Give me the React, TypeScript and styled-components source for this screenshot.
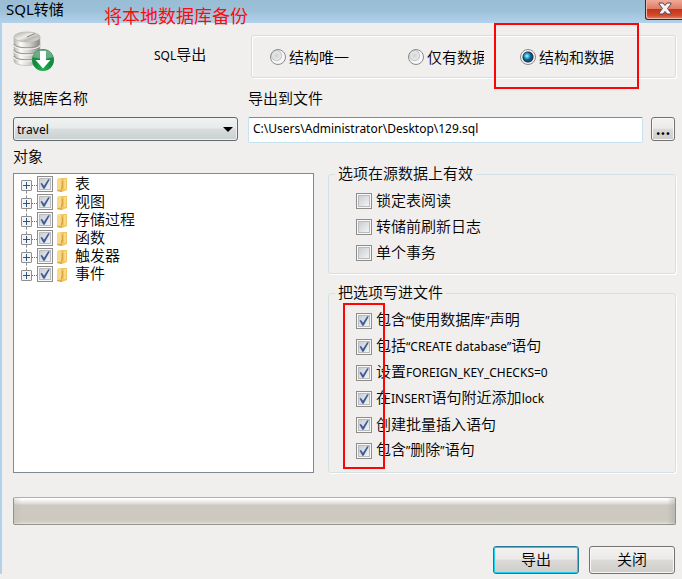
import React from 'react';
import styled, { createGlobalStyle } from 'styled-components';

const GlobalStyle = createGlobalStyle`
  *, *::before, *::after { box-sizing: border-box; }
  body {
    margin: 0;
    background: #f0efee;
    color: #000;
    font: 350 15px/20px "Noto Sans CJK SC", sans-serif;
  }
  button, input, select { font: inherit; color: inherit; margin: 0; }
`;

const Dialog = styled.main`
  position: relative;
  padding-bottom: 5px;
  background: linear-gradient(#b0d2ec, #b0d2ec) left top / 2px calc(100% - 5px) no-repeat #f0efee;
`;

const TitleBar = styled.header`
  display: flex;
  justify-content: space-between;
  height: 23px;
  padding-left: 6px;
  background: linear-gradient(#9abdd6, #9dc0d9 45%, #b1d2ea);
`;

const Title = styled.h1`
  margin: 0;
  font-family: "Noto Sans", "Noto Sans CJK SC", sans-serif;
  font-size: 15px;
  line-height: 19px;
  font-weight: 400;
`;

const Note = styled.strong`
  position: absolute;
  left: 104px;
  top: 3px;
  color: #fb0d0d;
  font-size: 18px;
  line-height: 24px;
  font-weight: 400;
`;

const CloseButton = styled.button`
  display: flex;
  justify-content: center;
  width: 37px;
  height: 20px;
  padding: 2px 0 0 1px;
  border: 1px solid #4b2023;
  border-width: 0 0 1px 1px;
  border-radius: 0 0 0 3px;
  background: linear-gradient(#f1aa98, #df7c66 45%, #c5341c 50%, #d24a2c 80%, #e08468);
  box-shadow: inset 1px -1px #efb5a5;
`;

const Body = styled.form`
  padding: 8px 6px 0 13px;
`;

const TopRow = styled.div`
  display: grid;
  grid-template-columns: 141px 97px 1fr;
  height: 57px;
`;

const ExportLabel = styled.span`
  padding-top: 13px;
`;

const Latin = styled.span`
  font-family: "Noto Sans", sans-serif;
  font-weight: 400;
  font-size: 12px;
`;

const RadioPanel = styled.div`
  position: relative;
  display: flex;
  align-items: center;
  height: 43px;
  margin-top: 4px;
  padding-left: 18px;
  border: 1px solid #d3dfe4;
  border-radius: 3px;
  box-shadow: inset 1px 1px #fff, 1px 1px #fff;
`;

const Choice = styled.label<{ $width: number }>`
  display: flex;
  align-items: center;
  gap: 3px;
  width: ${(p) => p.$width}px;
  overflow: hidden;
  white-space: nowrap;
  flex: none;
`;

const ChoiceGap = styled.span<{ $width: number }>`
  flex: 0 0 ${(p) => p.$width}px;
`;

const Radio = styled.input.attrs({ type: 'radio' })`
  appearance: none;
  flex: none;
  width: 16px;
  height: 16px;
  border: 1px solid #8a8a88;
  border-radius: 50%;
  background: radial-gradient(circle at 40% 40%, #cfd3d6, #e6e7e8 4px, #c3c5c6 5px, #f8f8f8 6px);
  &:checked {
    background: radial-gradient(circle at 6px 6px, #b9f1ff 0, #38b5dc 2px, transparent 4px),
      radial-gradient(circle, #12547e 4px, #173049 5px, #f6f6f6 6px);
  }
`;

const RedFrame = styled.span<{ $left: number; $top: number; $bottom: number; $width: number }>`
  position: absolute;
  left: ${(p) => p.$left}px;
  top: ${(p) => p.$top}px;
  bottom: ${(p) => p.$bottom}px;
  width: ${(p) => p.$width}px;
  border: 2px solid #fd0505;
  pointer-events: none;
`;

const Fields = styled.div`
  display: grid;
  grid-template-columns: 227px 1fr 25px;
  column-gap: 8px;
  row-gap: 9px;
`;

const FieldLabel = styled.label<{ $wide?: boolean }>`
  grid-column: ${(p) => (p.$wide ? 'span 2' : 'auto')};
  line-height: 20px;
`;

const SelectBox = styled.div`
  display: grid;
  align-items: center;
  width: 225px;
  height: 24px;
  & > * { grid-area: 1 / 1; }
  & > svg { justify-self: end; margin-right: 5px; pointer-events: none; }
`;

const Select = styled.select`
  appearance: none;
  width: 100%;
  height: 24px;
  padding: 0 3px;
  border: 1px solid #62696c;
  border-radius: 3px;
  background: linear-gradient(#f1f2f2, #e8ebeb 45%, #d9dddd 50%, #c8d0d0);
  box-shadow: inset 0 0 0 1px #eef3f3;
  font: 12px "Noto Sans", sans-serif;
`;

const PathInput = styled.input`
  width: 100%;
  min-width: 0;
  height: 26px;
  padding: 0 4px 3px;
  border: 1px solid #c7e2ee;
  border-top-color: #5f94b5;
  border-radius: 2px;
  background: #fff;
  font: 12px "Noto Sans", sans-serif;
`;

const Button = styled.button<{ $primary?: boolean; $small?: boolean }>`
  width: ${(p) => (p.$small ? 24 : 86)}px;
  height: ${(p) => (p.$small ? 24 : 28)}px;
  padding: 0 0 ${(p) => (p.$small ? 0 : 2)}px;
  border: 1px solid ${(p) => (p.$primary ? '#277896' : '#73726e')};
  border-radius: 3px;
  background: linear-gradient(#f3f2f1, #ebeae9 47%, #dcdad8 50%, #cfcdc9);
  box-shadow: inset 0 0 0 1px ${(p) => (p.$primary ? '#1cd0f2' : '#f8f8f7')};
  font-weight: ${(p) => (p.$small ? 700 : 'inherit')};
  line-height: 20px;
`;

const Columns = styled.div`
  display: grid;
  grid-template-columns: 301px 1fr;
  column-gap: 14px;
  margin-top: 3px;
`;

const LeftColumn = styled.section`
  display: flex;
  flex-direction: column;
  gap: 7px;
`;

const Heading = styled.h2`
  margin: 0;
  font-size: 15px;
  line-height: 20px;
  font-weight: inherit;
`;

const Tree = styled.ul`
  flex: 1;
  margin: 0;
  padding: 1px 7px;
  border: 1px solid #838791;
  background: #fff;
  list-style: none;
`;

const TreeRow = styled.li`
  display: flex;
  align-items: center;
  height: 18px;
`;

const Expander = styled.button`
  position: relative;
  flex: none;
  width: 11px;
  height: 11px;
  margin-top: 2px;
  padding: 0;
  border: 1px solid #918f8b;
  border-radius: 1px;
  background: linear-gradient(#2c5486, #2c5486) center / 7px 1px no-repeat,
    linear-gradient(#2c5486, #2c5486) center / 1px 7px no-repeat, #f5f4f2;
  li + li > &::before {
    content: "";
    position: absolute;
    left: 4px;
    bottom: 10px;
    height: 7px;
    border-left: 1px dashed #8e8e8e;
  }
`;

const Dots = styled.span`
  width: 5px;
  height: 1px;
  margin-top: 2px;
  border-top: 1px dotted #777;
`;

const TreeLabel = styled.label`
  display: flex;
  align-items: center;
  line-height: 16px;
  & > svg { margin: 1px 7px 0 4px; }
  & > span:last-child { padding-bottom: 2px; }
`;

const RightColumn = styled.div`
  display: flex;
  flex-direction: column;
  gap: 9px;
  padding-top: 18px;
`;

const Group = styled.fieldset<{ $roomy?: boolean }>`
  min-width: 0;
  margin: 0;
  padding: ${(p) => (p.$roomy ? '5px 8px 8px 27px' : '4px 8px 7px 27px')};
  border: 1px solid #d3e0e4;
  border-radius: 3px;
  box-shadow: 1px 1px #fff;
`;

const Legend = styled.legend`
  height: 20px;
  margin-left: -21px;
  padding: 0 3px;
  line-height: 18px;
`;

const Checks = styled.div`
  position: relative;
`;

const CheckLabel = styled.label`
  display: flex;
  align-items: center;
  gap: 4px;
  height: 26px;
  & > span:last-child { padding-bottom: 2px; }
`;

const CheckBox = styled.span`
  display: grid;
  place-items: center;
  flex: none;
  width: 16px;
  height: 16px;
  & > * { grid-area: 1 / 1; }
  & > svg { pointer-events: none; }
  & > input:not(:checked) + svg { display: none; }
`;

const CheckInput = styled.input.attrs({ type: 'checkbox' })`
  appearance: none;
  width: 16px;
  height: 16px;
  border: 1px solid #8e8d8b;
  background: linear-gradient(135deg, #c9ced3, #f3f3f3) center / 10px 10px no-repeat,
    linear-gradient(#b9bcbe, #b9bcbe) center / 12px 12px no-repeat, #f8f8f8;
`;

const ProgressTrack = styled.div`
  height: 28px;
  margin-top: 24px;
  border: 1px solid #92918b;
  border-top-color: #b2b0ac;
  border-radius: 2px;
  background: linear-gradient(90deg, #b8b5ae55, transparent 8px, transparent calc(100% - 8px), #aaa7a288),
    linear-gradient(#fff 0, #fff 1px, #f1f0ee 3px, #dcdad7 6px, #cdc9c1 7px, #cdc9c1 22px, #d5d4cc 25px, #eeeeea 26px);
`;

const Footer = styled.footer`
  display: flex;
  justify-content: flex-end;
  gap: 10px;
  margin-top: 21px;
  padding-right: 1px;
`;

function Mixed({ text }: { text: string }) {
  const parts = text.split(/([\u0020-\u007e“”]+)/).filter(Boolean);
  return (
    <span>
      {parts.map((part, i) => (/^[\u0020-\u007e“”]/.test(part) ? <Latin key={i}>{part}</Latin> : part))}
    </span>
  );
}

function Check({ id, on }: { id: string; on?: boolean }) {
  return (
    <CheckBox>
      <CheckInput id={id} defaultChecked={on} />
      <svg width="12" height="12" viewBox="0 0 12 12" aria-hidden="true">
        <path d="M1.5 5.6 3 5 5 7.8 9.2 1.2 10.8 1.6 5.6 10.8 4.3 10.8Z" fill="#3f5c97" />
      </svg>
    </CheckBox>
  );
}

function DatabaseIcon() {
  return (
    <svg width="42" height="42" viewBox="0 0 42 42" aria-hidden="true">
      <defs>
        <linearGradient id="metal">
          <stop offset="0" stopColor="#b7b5af" />
          <stop offset=".25" stopColor="#fbfbf9" />
          <stop offset=".6" stopColor="#d2d0cb" />
          <stop offset="1" stopColor="#85837d" />
        </linearGradient>
        <linearGradient id="lid" x2="1" y2="1">
          <stop offset="0" stopColor="#aaa8a3" />
          <stop offset=".45" stopColor="#efeeeb" />
          <stop offset=".65" stopColor="#b9b7b1" />
          <stop offset="1" stopColor="#f5f4f2" />
        </linearGradient>
        <radialGradient id="green" cx=".5" cy=".9" r=".9">
          <stop offset="0" stopColor="#20b34f" />
          <stop offset=".5" stopColor="#0d8a3c" />
          <stop offset="1" stopColor="#3a8d5a" />
        </radialGradient>
      </defs>
      <path d="M1 6v24c0 6 26 6 26 0V6Z" fill="url(#metal)" stroke="#bab8b2" strokeWidth=".7" />
      <path d="M1 13c2 5 24 5 26 0M1 19c2 5 24 5 26 0M1 25c2 5 24 5 26 0" fill="none" stroke="#97958f" strokeWidth="1.2" />
      <path d="M1 14.4c2 5 24 5 26 0M1 20.4c2 5 24 5 26 0M1 26.4c2 5 24 5 26 0" fill="none" stroke="#f7f6f3" strokeWidth="1.2" />
      <ellipse cx="14" cy="6" rx="13" ry="5" fill="url(#lid)" stroke="#c0bfbb" />
      <path d="m14 6 8-3.5" stroke="#8e8c87" strokeWidth="1.2" />
      <circle cx="30" cy="29" r="11" fill="url(#green)" />
      <path d="M20 26a10.5 10.5 0 0 1 20 0q-10 4-20 0Z" fill="#fff" opacity=".3" />
      <path d="M27 20h6v9h4.500L30 37.500 22.500 29H27Z" fill="#fff" />
    </svg>
  );
}

function FolderIcon() {
  return (
    <svg width="11" height="14" viewBox="0 0 11 14" aria-hidden="true">
      <path d="M0 1 4 0h6v12l-5 2-5-1Z" fill="#f0c660" />
      <path d="M0 1 4 0v11L0 12Z" fill="#f8d98a" />
      <path d="M5 3h1v6l-1 2-1 1V9l1-1Z" fill="#d8a440" />
      <path d="M7 1h2v10H7Z" fill="#f8d885" />
      <path d="M0 12h5v2l-5-1Z" fill="#e2aa42" />
    </svg>
  );
}

const objects = ['表', '视图', '存储过程', '函数', '触发器', '事件'];
const sourceOptions = ['锁定表阅读', '转储前刷新日志', '单个事务'];
const fileOptions = [
  '包含“使用数据库”声明',
  '包括“CREATE database”语句',
  '设置FOREIGN_KEY_CHECKS=0',
  '在INSERT语句附近添加lock',
  '创建批量插入语句',
  '包含”删除”语句',
];

export default function App() {
  return (
    <>
      <GlobalStyle />
      <Dialog>
        <TitleBar>
          <Title>SQL转储</Title>
          <CloseButton type="button" aria-label="关闭">
            <svg width="14" height="13" viewBox="0 0 14 13" aria-hidden="true">
              <path
                d="M1 1h4l2 2.500L9 1h4v1L9.500 6.500 13 11v1H9L7 9.500 5 12H1v-1l3.500-4.500L1 2Z"
                fill="#f5f2f1"
                stroke="#5b4654"
              />
            </svg>
          </CloseButton>
        </TitleBar>
        <Note>将本地数据库备份</Note>

        <Body onSubmit={(e) => e.preventDefault()}>
          <TopRow>
            <DatabaseIcon />
            <ExportLabel id="export-kind">
              <Mixed text="SQL导出" />
            </ExportLabel>
            <RadioPanel role="radiogroup" aria-labelledby="export-kind">
              <Choice $width={90}>
                <Radio name="kind" />
                结构唯一
              </Choice>
              <ChoiceGap $width={48} />
              <Choice $width={76}>
                <Radio name="kind" />
                仅有数据
              </Choice>
              <ChoiceGap $width={36} />
              <Choice $width={100}>
                <Radio name="kind" defaultChecked />
                结构和数据
              </Choice>
              <RedFrame $left={242} $top={-13} $bottom={-12} $width={145} />
            </RadioPanel>
          </TopRow>

          <Fields>
            <FieldLabel htmlFor="database">数据库名称</FieldLabel>
            <FieldLabel htmlFor="path" $wide>
              导出到文件
            </FieldLabel>
            <SelectBox>
              <Select id="database" defaultValue="travel">
                <option>travel</option>
              </Select>
              <svg width="10" height="5" viewBox="0 0 10 5" aria-hidden="true">
                <path d="M0 0h10L5 5Z" />
              </svg>
            </SelectBox>
            <PathInput id="path" defaultValue="C:\Users\Administrator\Desktop\129.sql" />
            <Button type="button" $small aria-label="浏览">
              ...
            </Button>
          </Fields>

          <Columns>
            <LeftColumn>
              <Heading id="objects">对象</Heading>
              <Tree aria-labelledby="objects">
                {objects.map((name, i) => (
                  <TreeRow key={name}>
                    <Expander type="button" aria-label={`展开${name}`} />
                    <Dots />
                    <TreeLabel htmlFor={`object-${i}`}>
                      <Check id={`object-${i}`} on />
                      <FolderIcon />
                      <span>{name}</span>
                    </TreeLabel>
                  </TreeRow>
                ))}
              </Tree>
            </LeftColumn>

            <RightColumn>
              <Group>
                <Legend>选项在源数据上有效</Legend>
                <Checks>
                  {sourceOptions.map((text, i) => (
                    <CheckLabel key={text} htmlFor={`source-${i}`}>
                      <Check id={`source-${i}`} />
                      <Mixed text={text} />
                    </CheckLabel>
                  ))}
                </Checks>
              </Group>
              <Group $roomy>
                <Legend>把选项写进文件</Legend>
                <Checks>
                  {fileOptions.map((text, i) => (
                    <CheckLabel key={text} htmlFor={`file-${i}`}>
                      <Check id={`file-${i}`} on />
                      <Mixed text={text} />
                    </CheckLabel>
                  ))}
                  <RedFrame $left={-13} $top={-5} $bottom={-5} $width={42} />
                </Checks>
              </Group>
            </RightColumn>
          </Columns>

          <ProgressTrack role="progressbar" aria-label="导出进度" aria-valuenow={0} />

          <Footer>
            <Button type="submit" $primary>
              导出
            </Button>
            <Button type="button">关闭</Button>
          </Footer>
        </Body>
      </Dialog>
    </>
  );
}
